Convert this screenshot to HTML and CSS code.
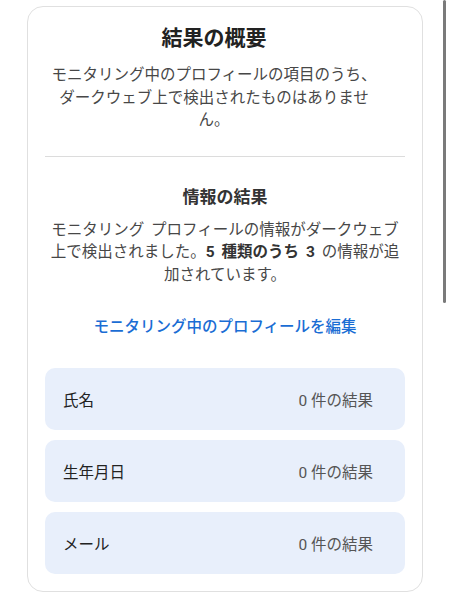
FILE: index.html
```html
<!DOCTYPE html>
<html lang="ja">
<head>
<meta charset="utf-8">
<link rel="stylesheet" href="styles.css">
</head>
<body>
<div class="page">
  <div class="card">
    <section class="summary">
      <h1 class="title">結果の概要</h1>
      <p class="text">モニタリング中のプロフィールの項目のうち、ダークウェブ上で検出されたものはありません。</p>
    </section>
    <hr class="divider">
    <section class="details">
      <h2 class="subtitle">情報の結果</h2>
      <p class="text wide">モニタリング プロフィールの情報がダークウェブ上で検出されました。<b>5 種類のうち 3</b> の情報が追加されています。</p>
      <a class="link" href="#">モニタリング中のプロフィールを編集</a>
    </section>
    <ul class="rows">
      <li class="row"><span class="label">氏名</span><span class="value">0 件の結果</span></li>
      <li class="row"><span class="label">生年月日</span><span class="value">0 件の結果</span></li>
      <li class="row"><span class="label">メール</span><span class="value">0 件の結果</span></li>
    </ul>
  </div>
  <div class="scrollbar"></div>
</div>
</body>
</html>
```
FILE: styles.css
```css
html, body {
  margin: 0;
  padding: 0;
  background: #ffffff;
}
body {
  font-family: Roboto, "Noto Sans CJK JP", sans-serif;
  color: #444444;
}
.page {
  position: relative;
  width: 451px;
  height: 600px;
  padding: 6px 0 0 27px;
  box-sizing: border-box;
}
.card {
  width: 396px;
  box-sizing: border-box;
  border: 1px solid #e0e0e0;
  border-radius: 16px;
  padding: 17px 17px 17px 17px;
  display: flex;
  flex-direction: column;
}
.summary {
  display: flex;
  flex-direction: column;
  align-items: center;
  margin-right: 22px;
}
.title {
  margin: 0;
  font-size: 21px;
  line-height: 28px;
  font-weight: 700;
  color: #222222;
}
.text {
  margin: 12px 0 0 0;
  font-size: 15.5px;
  line-height: 22.5px;
  text-align: center;
  color: #474747;
}
.text.wide {
  margin-top: 10px;
  word-spacing: 3px;
}
.text b {
  font-weight: 700;
  color: #333333;
}
.divider {
  margin: 24px 0 0 0;
  border: 0;
  height: 1px;
  background: #dcdcdc;
}
.details {
  display: flex;
  flex-direction: column;
  align-items: center;
  margin-top: 28px;
}
.subtitle {
  margin: 0;
  font-size: 17px;
  line-height: 24px;
  font-weight: 700;
  color: #333333;
}
.link {
  margin-top: 29.5px;
  font-size: 15.5px;
  line-height: 22px;
  font-weight: 500;
  color: #1a6dd4;
  text-decoration: none;
}
.rows {
  list-style: none;
  margin: 30px 0 0 0;
  padding: 0;
  display: flex;
  flex-direction: column;
  gap: 10px;
}
.row {
  height: 62px;
  border-radius: 10px;
  background: #e8effb;
  display: flex;
  align-items: center;
  justify-content: space-between;
  padding: 0 32px 0 18px;
  font-size: 15.5px;
}
.label {
  color: #222222;
}
.value {
  color: #555555;
}
.scrollbar {
  position: absolute;
  left: 443px;
  top: 0;
  width: 3px;
  height: 303px;
  border-radius: 2px;
  background: #7a7a7a;
}
```
